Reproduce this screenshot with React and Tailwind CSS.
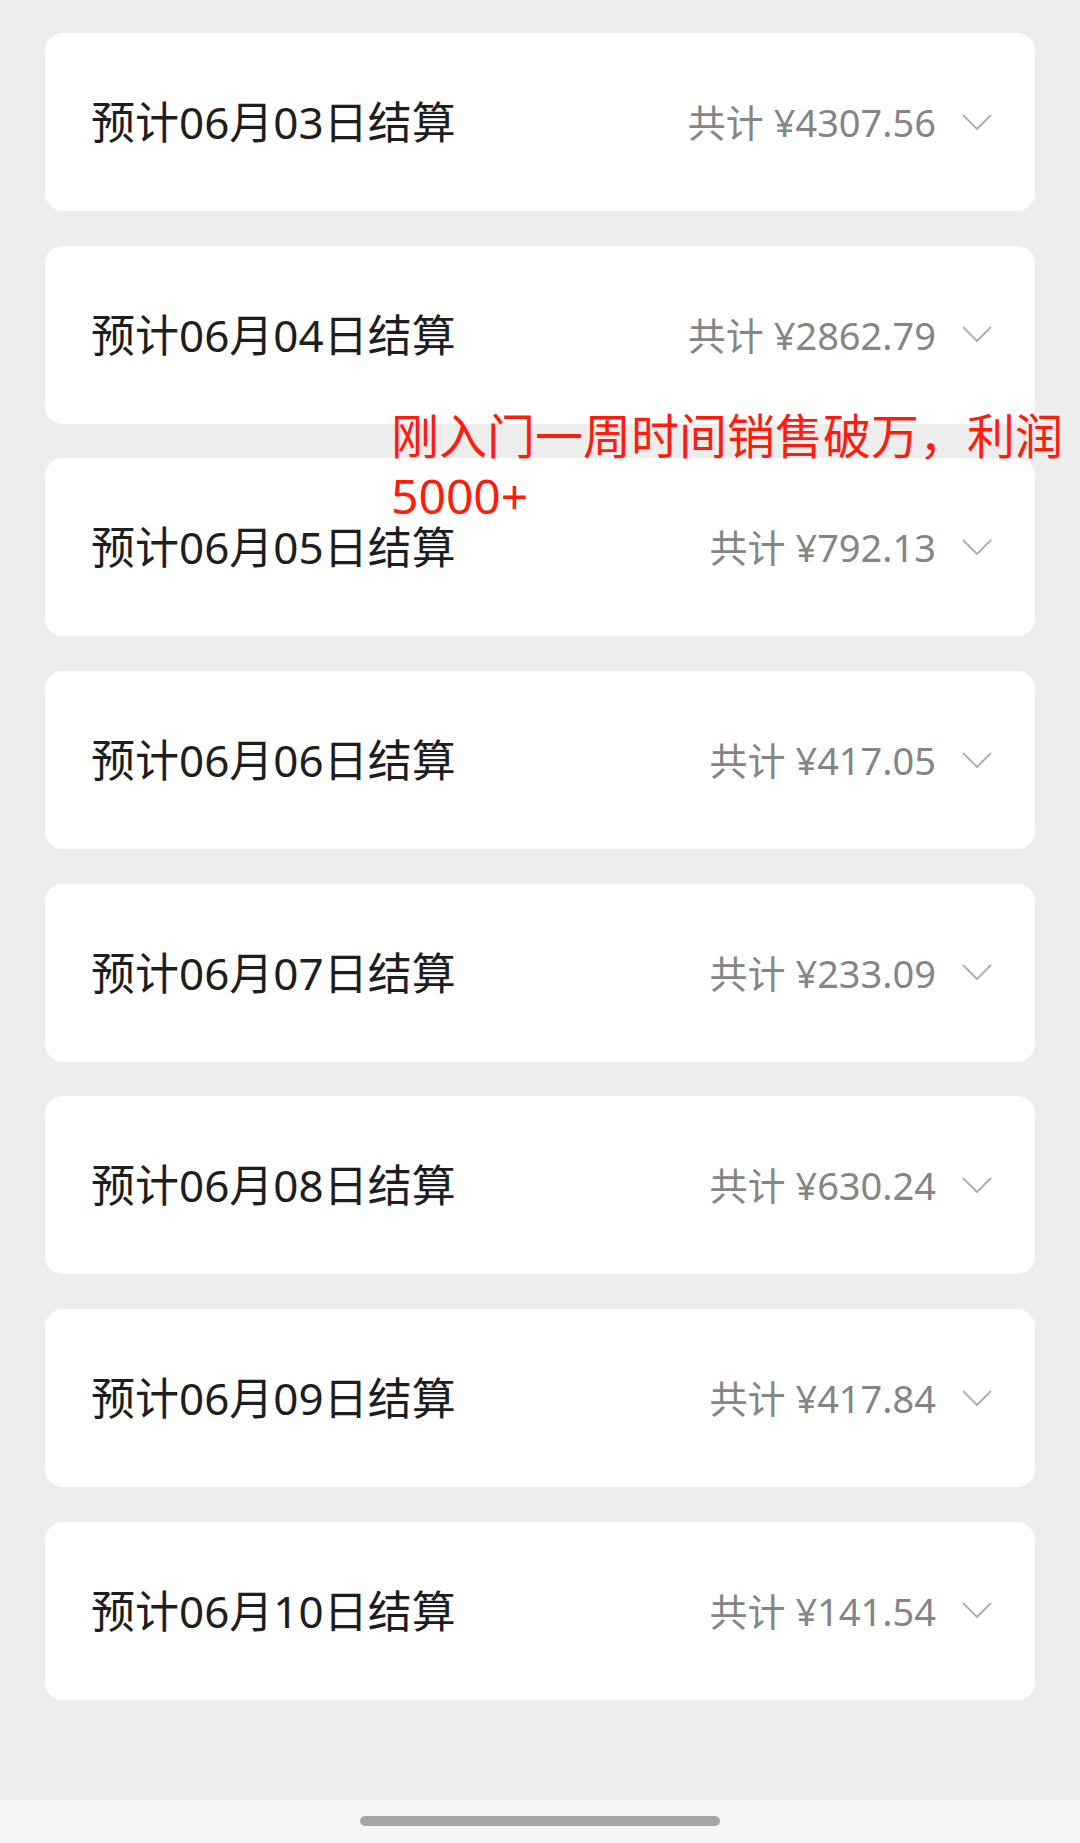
const rows = [
  { date: '06月03日', total: '4307.56' },
  { date: '06月04日', total: '2862.79' },
  { date: '06月05日', total: '792.13' },
  { date: '06月06日', total: '417.05' },
  { date: '06月07日', total: '233.09' },
  { date: '06月08日', total: '630.24' },
  { date: '06月09日', total: '417.84' },
  { date: '06月10日', total: '141.54' },
];

const font = { fontFamily: '"Noto Sans", "Noto Sans CJK SC", sans-serif' };

// thin, wide chevron like the one in the app
const Chevron = () => (
  <svg width="30" height="17" viewBox="0 0 30 17" className="ml-[26px]" fill="none">
    <polyline points="1.5,1.5 15,15 28.5,1.5" stroke="#b0b0b0" strokeWidth="2" strokeLinecap="round" strokeLinejoin="round" />
  </svg>
);

const SettleCard = ({ date, total }) => (
  <div className="h-[178px] bg-white rounded-[18px] flex items-center justify-between pl-[46px] pr-[43px]">
    <span className="text-[44px] text-[#1e1e1e] leading-none">预计{date}结算</span>
    <div className="flex items-center">
      <span className="text-[38px] text-[#858585] leading-none">共计 ¥{total}</span>
      <Chevron />
    </div>
  </div>
);

export default function App() {
  return (
    <div className="relative w-[1080px] min-h-[1843px] bg-[#ededed] flex flex-col" style={font}>
      <main className="flex-1 px-[45px] pt-[33px] flex flex-col gap-[34.7px]">
        {rows.map((r) => (
          <SettleCard key={r.date} {...r} />
        ))}
      </main>

      {/* bottom gesture bar */}
      <div className="h-[43px] bg-[#f6f6f6] flex justify-center pt-[16px]">
        <div className="w-[360px] h-[10px] rounded-full bg-[#a6a6a6]" />
      </div>

      {/* red caption pasted over the screenshot */}
      <div className="absolute left-[391px] top-[406px] text-[48px] leading-[60px] text-[#ff1c0c]">
        刚入门一周时间销售破万，利润
        <br />
        5000+
      </div>
    </div>
  );
}
